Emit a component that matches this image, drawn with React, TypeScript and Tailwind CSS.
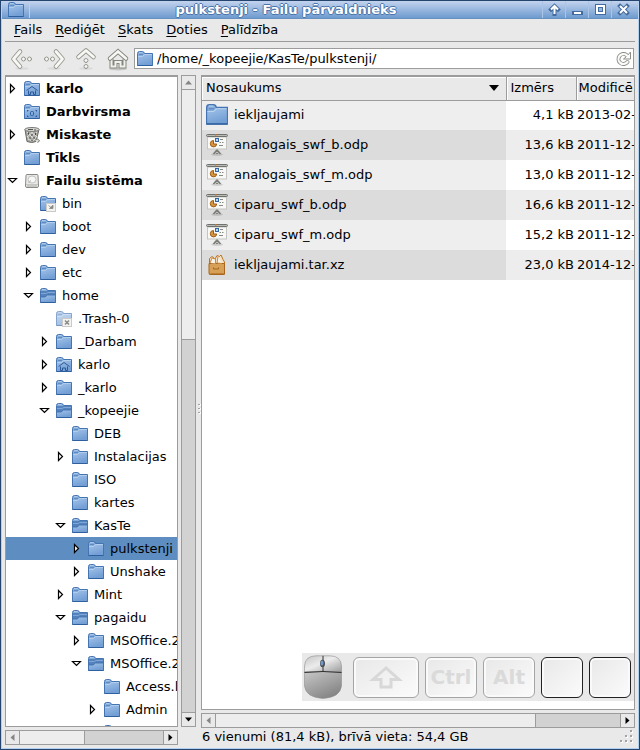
import React from 'react';
import clsx from 'clsx';

type IconKind = 'folder' | 'open' | 'home' | 'desktop' | 'trash' | 'drive' | 'link' | 'locked';

interface TreeNode {
  name: string;
  depth: number;
  icon?: IconKind;
  state?: 'open' | 'closed';
  selected?: boolean;
}

interface FileEntry {
  name: string;
  size: string;
  date: string;
  kind: 'folder' | 'slides' | 'archive';
}

const TREE: TreeNode[] = [
  { name: 'karlo', depth: 0, icon: 'home', state: 'closed' },
  { name: 'Darbvirsma', depth: 0, icon: 'desktop' },
  { name: 'Miskaste', depth: 0, icon: 'trash', state: 'closed' },
  { name: 'Tīkls', depth: 0 },
  { name: 'Failu sistēma', depth: 0, icon: 'drive', state: 'open' },
  { name: 'bin', depth: 1, icon: 'link' },
  { name: 'boot', depth: 1, state: 'closed' },
  { name: 'dev', depth: 1, state: 'closed' },
  { name: 'etc', depth: 1, state: 'closed' },
  { name: 'home', depth: 1, icon: 'open', state: 'open' },
  { name: '.Trash-0', depth: 2, icon: 'locked' },
  { name: '_Darbam', depth: 2, state: 'closed' },
  { name: 'karlo', depth: 2, icon: 'home', state: 'closed' },
  { name: '_karlo', depth: 2, state: 'closed' },
  { name: '_kopeejie', depth: 2, icon: 'open', state: 'open' },
  { name: 'DEB', depth: 3 },
  { name: 'Instalacijas', depth: 3, state: 'closed' },
  { name: 'ISO', depth: 3 },
  { name: 'kartes', depth: 3 },
  { name: 'KasTe', depth: 3, icon: 'open', state: 'open' },
  { name: 'pulkstenji', depth: 4, state: 'closed', selected: true },
  { name: 'Unshake', depth: 4, state: 'closed' },
  { name: 'Mint', depth: 3, state: 'closed' },
  { name: 'pagaidu', depth: 3, icon: 'open', state: 'open' },
  { name: 'MSOffice.2', depth: 4, state: 'closed' },
  { name: 'MSOffice.2', depth: 4, icon: 'open', state: 'open' },
  { name: 'Access.l', depth: 5 },
  { name: 'Admin', depth: 5, state: 'closed' },
  { name: '', depth: 5 },
];

const FILES: FileEntry[] = [
  { name: 'iekljaujami', size: '4,1 kB', date: '2013-02-', kind: 'folder' },
  { name: 'analogais_swf_b.odp', size: '13,6 kB', date: '2011-12-', kind: 'slides' },
  { name: 'analogais_swf_m.odp', size: '13,0 kB', date: '2011-12-', kind: 'slides' },
  { name: 'ciparu_swf_b.odp', size: '16,6 kB', date: '2011-12-', kind: 'slides' },
  { name: 'ciparu_swf_m.odp', size: '15,2 kB', date: '2011-12-', kind: 'slides' },
  { name: 'iekljaujami.tar.xz', size: '23,0 kB', date: '2014-12-', kind: 'archive' },
];

const MENU = ['Fails', 'Rediģēt', 'Skats', 'Doties', 'Palīdzība'];

// Gradients shared by all icons
const Gradients = () => (
  <svg width="0" height="0" className="absolute" aria-hidden="true">
    <defs>
      <linearGradient id="blue" x1="0" y1="0" x2="0.4" y2="1">
        <stop offset="0" stopColor="#a3c3e9" />
        <stop offset="1" stopColor="#739fd5" />
      </linearGradient>
      <linearGradient id="mouseTop" x1="0" y1="0" x2="1" y2="1">
        <stop offset="0" stopColor="#c4c4c4" />
        <stop offset="0.45" stopColor="#ececec" />
        <stop offset="1" stopColor="#9a9a9a" />
      </linearGradient>
      <linearGradient id="mouseBody" x1="0" y1="0" x2="0.6" y2="1">
        <stop offset="0" stopColor="#c8c8c8" />
        <stop offset="1" stopColor="#858585" />
      </linearGradient>
    </defs>
  </svg>
);

const FolderIcon = ({ kind = 'folder', size = 16 }: { kind?: IconKind; size?: number }) => {
  if (kind === 'trash') {
    return (
      <svg width={size} height={size} viewBox="0 0 16 16" className="shrink-0">
        <path d="M1 2.500 3 14.500Q8 16.500 12 14.500L15 2.500" fill="#a8a8a4" stroke="#6b6964" />
        <path d="M3 5l8 8M6 4l7 6M13 5l-9 8M10 4l-7 6M3 9l4 5M13 9l-4 5" stroke="#e6e6e3" strokeWidth="0.800" />
        <path d="M4.500 5.500v2M8 7v2M11.500 6v2M6 10v2M10 10v2M8 13v1" stroke="#454541" />
        <ellipse cx="8" cy="2.500" rx="7.200" ry="2" fill="#d8d8d4" stroke="#7a7a76" />
        <path d="M4 2.500h5M10 3h2" stroke="#55534f" />
        <path d="M11 13.500c2-2.500 4-1 4.500.5l-2 1.500" fill="#ddd" stroke="#77756f" />
      </svg>
    );
  }
  if (kind === 'drive') {
    return (
      <svg width={size} height={size} viewBox="0 0 16 16" className="shrink-0">
        <path d="M3 1.500h10q1 0 1 1l.5 10.500q0 1.500-1.500 1.500H3q-1.500 0-1.500-1.500L2 2.500q0-1 1-1z" fill="#e9e9e7" stroke="#888a85" />
        <ellipse cx="8" cy="6.500" rx="4" ry="3.500" fill="#f7f7f7" stroke="#c3c3c0" />
        <path d="M4.500 9.500 7 7.500" stroke="#b0b0ad" />
        <path d="M2 11.500h12" stroke="#c6c6c3" />
        <path d="M3 13h10" stroke="#a5a5a2" />
      </svg>
    );
  }
  return (
    <svg width={size} height={size} viewBox="0 0 16 16" className="shrink-0">
      <g opacity={kind === 'locked' ? 0.65 : 1}>
        <path d="M.5 14.500V2.500Q.5.500 2.500.500H5.500Q7 .500 7.500 2.500H15.500V14.500z" fill="#86add9" stroke="#4574b3" />
        {kind === 'open' ? (
          <>
            <path d="M1 3h14v6H1z" fill="#5482bd" />
            <path d="M1 5.500H6L8 4.500H15" fill="none" stroke="#7fa6d6" />
            <path d="M1 14V9H5L7.500 7H15V14z" fill="url(#blue)" />
            <path d="M1 9H5L7.500 7H15" fill="none" stroke="#3a69a8" strokeWidth="0.800" />
          </>
        ) : (
          <>
            <path d="M1 14V5H5.500L7.500 3H15V14z" fill="url(#blue)" />
            <path d="M1 5.500H5.500L7.500 3.500H15" fill="none" stroke="#b9d3f0" strokeWidth="0.800" />
            <path d="M2 3.500h4" stroke="#5583bd" strokeWidth="0.800" />
          </>
        )}
        <path d="M.5 14.500h15" stroke="#2f5f9f" />
        <path d="M2 1.500h3.500" stroke="#a9c8eb" />
      </g>
      {kind === 'home' && (
        <path d="M2.500 9.500 8 5.500l5.500 4M4.500 9.500v4h2V11h3v2.500h2v-4" fill="none" stroke="#2c5a98" />
      )}
      {kind === 'desktop' && (
        <g fill="none" stroke="#2c5a98">
          <rect x="6.500" y="7.500" width="3" height="4" rx="1" />
          <path d="M3 6.500h1.500M11.500 6.500H13M3 12.500h1.500M11.500 12.500H13M3.500 6v1.500M12.500 6v1.500M3.500 11.500V13M12.500 11.500V13" />
        </g>
      )}
      {(kind === 'link' || kind === 'locked') && <rect x="6.500" y="7.500" width="9" height="8" fill="#f3f3f2" stroke="#cacac8" />}
      {kind === 'link' && <path d="M8.500 9.500 11 11.500M9.500 12.500h3.500v-3.500z" fill="#888a85" stroke="#888a85" strokeWidth="0.800" />}
      {kind === 'locked' && <path d="m9 9.500 4 4m0-4-4 4" stroke="#888a85" strokeWidth="1.500" />}
    </svg>
  );
};

const SlidesIcon = () => (
  <svg width="22" height="22" viewBox="0 0 22 22" className="shrink-0">
    <ellipse cx="11" cy="20.500" rx="6" ry="1.500" fill="#000" opacity="0.130" />
    <path d="M11 15v2M7.500 20l2.500-3h2l2.500 3" fill="none" stroke="#777973" strokeWidth="1.500" />
    <circle cx="11" cy="18.500" r="1.200" fill="#ddd" stroke="#777973" />
    <rect x="1.500" y="3" width="19" height="12" fill="#f8f8f6" stroke="#c4c4c0" />
    <rect x=".5" y=".5" width="21" height="2" rx="1" fill="#b9b9b5" stroke="#70726d" />
    <path d="M9 1h1.500" stroke="#f57900" strokeWidth="1.500" />
    <path d="M7.500 6.500a3.200 3.200 0 1 0 3.200 3.500L7.500 10z" fill="#d79543" stroke="#9c5e16" />
    <rect x="9.500" y="4.500" width="3" height="3" fill="#b9d3f2" stroke="#3465a4" />
    <path d="M14 5.500h3M13.500 8.500H15M16 8.500h1.500M13 11.500h4" stroke="#898b86" />
  </svg>
);

const ArchiveIcon = () => (
  <svg width="22" height="22" viewBox="0 0 22 22" className="shrink-0">
    <path d="M3.500 8V4.500L6 2.500 9 5l2-3.500 2.500 1L15 1l2 4.500 1.500 2.500v12.500h-15z" fill="#f5e2c5" stroke="#b97325" />
    <path d="M3 9.500h15.500V19q0 1.500-1.500 1.500H4.500Q3 20.500 3 19z" fill="#d6a157" stroke="#a8651d" />
    <path d="M4 9 6 4l3.500 1v4.500M12 2.500 11 9l5 .5" fill="#fbf2e4" stroke="#c58a3f" />
    <path d="M7.500 13.500v1.500h5v-1.500" fill="none" stroke="#a8651d" />
    <path d="M4.500 19.500h13" stroke="#be8036" />
  </svg>
);

// Pale outlined arrow with two dots behind it, rotated for each direction
const ArrowIcon = ({ turn }: { turn: number }) => (
  <svg width="24" height="24" viewBox="0 0 24 24">
    <ellipse cx="12" cy="21.500" rx="7" ry="1.500" fill="#000" opacity="0.060" />
    <g transform={`rotate(${turn} 12 12)`} fill="none" strokeLinecap="round" strokeLinejoin="round">
      <path d="M10 4.500 3.500 12l6.500 7.500" stroke="#96978f" strokeWidth="4.600" />
      <path d="M10 4.500 3.500 12l6.500 7.500" stroke="#f7f7f3" strokeWidth="2.800" />
      <circle cx="13.500" cy="12" r="2" fill="#f7f7f5" stroke="#96978f" />
      <circle cx="19.500" cy="12" r="2" fill="#f7f7f5" stroke="#96978f" />
    </g>
  </svg>
);

const HomeIcon = () => (
  <svg width="24" height="24" viewBox="0 0 24 24">
    <ellipse cx="12" cy="22" rx="9" ry="1.500" fill="#000" opacity="0.150" />
    <path d="M5.500 12v7.500h4V15h5v4.500h4V12" fill="none" stroke="#85867f" strokeWidth="4" />
    <path d="M5.500 12v7.500h4V15h5v4.500h4V12" fill="none" stroke="#f1f1ed" strokeWidth="2" />
    <path d="M4 11.500 12 4.500l8 7" fill="none" stroke="#85867f" strokeWidth="4.500" strokeLinecap="round" />
    <path d="M4 11.500 12 4.500l8 7" fill="none" stroke="#f7f7f4" strokeWidth="2.600" strokeLinecap="round" />
  </svg>
);

const ReloadIcon = () => (
  <svg width="16" height="16" viewBox="0 0 16 16" fill="none">
    <path d="M12.500 11A5 5 0 1 1 11.500 4" stroke="#8d8e89" strokeWidth="4" strokeLinecap="round" />
    <path d="M15.500 1v7H8.500l3-2.500z" fill="#fbfbfa" stroke="#8d8e89" />
    <path d="M12.500 11A5 5 0 1 1 11.500 4L13 5.500" stroke="#fbfbfa" strokeWidth="2.200" strokeLinecap="round" />
  </svg>
);

const Expander = ({ state }: { state?: 'open' | 'closed' }) => (
  <svg width="16" height="16" viewBox="0 0 16 16" className="shrink-0" fill="#fff" stroke="#000" strokeWidth="1.200">
    {state === 'closed' && <path d="M4.500 3.500v8L8.500 7.500z" />}
    {state === 'open' && <path d="M2.500 5.500h8L6.500 9.500z" />}
  </svg>
);

const ScrollArrow = ({ path, label, dim }: { path: string; label: string; dim?: boolean }) => (
  <button aria-label={label} className="flex size-[13px] shrink-0 items-center justify-center bg-[#e9e9e9]">
    <svg width="9" height="9" viewBox="0 0 9 9" fill={dim ? '#858585' : '#000'}>
      <path d={path} />
    </svg>
  </button>
);

const HScroll = ({ thumb }: { thumb: string }) => (
  <div className="flex h-[15px] shrink-0 border border-[#9c9c9c]">
    <ScrollArrow label="Pa kreisi" path="M6.500 1v7L2.500 4.500z" dim />
    <div className="flex min-w-0 flex-1 justify-end border-x border-[#9c9c9c] bg-[#ededed]">
      <div className={clsx('border-l border-[#9c9c9c] bg-[#d2d2d2]', thumb)} />
    </div>
    <ScrollArrow label="Pa labi" path="M2.500 1v7L6.500 4.500z" />
  </div>
);

const TITLE_BUTTONS = [
  { label: 'Sarullēt', path: 'M6.500 11V4M3 6.500 6.500 3 10 6.500' },
  { label: 'Minimizēt', path: 'M3 10h7' },
  { label: 'Maksimizēt', path: 'M3 3h7v7H3z' },
  { label: 'Aizvērt', path: 'm3 3 7 7m0-7-7 7' },
];

const TitleBar = () => (
  <header className="flex h-[18px] shrink-0 items-center border-b border-[#6690c2] bg-linear-to-b from-[#c3d3ee] to-[#6e9bcf]">
    <div className="flex h-full w-7 items-center justify-center border-r border-[#b9cfeb]">
      <FolderIcon />
    </div>
    <h1 className="flex-1 text-center text-[13px] leading-4 font-bold text-white [text-shadow:1px_0_#4a74aa,-1px_0_#4a74aa,0_1px_#4a74aa,0_-1px_#4a74aa]">
      pulkstenji - Failu pārvaldnieks
    </h1>
    <div className="flex h-full pr-1">
      {TITLE_BUTTONS.map((b) => (
        <button key={b.label} aria-label={b.label} className="flex h-full w-[23px] items-center justify-center border-l border-[#a9c5e8]">
          <svg width="13" height="13" viewBox="0 0 13 13" fill="none">
            <path d={b.path} stroke="#426b9f" strokeWidth="4" strokeLinecap="square" />
            <path d={b.path} stroke="#fff" strokeWidth="2" />
          </svg>
        </button>
      ))}
    </div>
  </header>
);

const Toolbar = () => (
  <div className="flex h-[33px] shrink-0 items-start px-1 pt-1.5">
    <button aria-label="Atpakaļ" className="flex h-[22px] w-8 items-center justify-center"><ArrowIcon turn={0} /></button>
    <button aria-label="Uz priekšu" className="flex h-[22px] w-8 items-center justify-center"><ArrowIcon turn={180} /></button>
    <button aria-label="Uz augšu" className="flex h-[22px] w-8 items-center justify-center"><ArrowIcon turn={90} /></button>
    <button aria-label="Mājas" className="flex h-[22px] w-8 items-center justify-center"><HomeIcon /></button>
    <div className="flex h-[21px] min-w-0 flex-1 items-center gap-1 border border-[#9c9c9c] bg-white px-0.5">
      <FolderIcon />
      <input
        aria-label="Atrašanās vieta"
        defaultValue="/home/_kopeejie/KasTe/pulkstenji/"
        className="h-[19px] min-w-0 flex-1 bg-transparent outline-none"
      />
      <button aria-label="Pārlādēt"><ReloadIcon /></button>
    </div>
  </div>
);

const SidePane = () => (
  <div className="flex w-[191px] shrink-0 flex-col gap-[3px]">
    <div className="flex min-h-0 flex-1 gap-[3px]">
      <ul className="min-w-0 flex-1 overflow-hidden border border-t-2 border-[#9c9c9c] bg-white">
        {TREE.map((node, i) => (
          <li
            key={i}
            className={clsx('flex h-[23px] items-center whitespace-nowrap', node.selected && 'bg-[#5e8dc1]')}
            style={{ paddingLeft: node.depth * 16 }}
          >
            <Expander state={node.state} />
            <span className="ml-0.5 flex items-center gap-1.5">
              <FolderIcon kind={node.icon} />
              <span className={clsx(node.depth === 0 && 'font-bold')}>{node.name}</span>
            </span>
          </li>
        ))}
      </ul>
      <div className="flex w-[15px] flex-col border border-[#9c9c9c]">
        <ScrollArrow label="Augšup" path="M1 6.500h7L4.500 2.500z" dim />
        <div className="flex flex-1 flex-col justify-end border-y border-[#9c9c9c] bg-[#ededed]">
          <div className="h-[60%] border-t border-[#9c9c9c] bg-[#d2d2d2]" />
        </div>
        <ScrollArrow label="Lejup" path="M1 2.500h7L4.500 6.500z" />
      </div>
    </div>
    <div className="pr-[18px]">
      <HScroll thumb="w-[55%]" />
    </div>
  </div>
);

const FileTable = () => (
  <table className="w-full table-fixed border-collapse">
    <thead>
      <tr className="h-[23px] border-b border-[#9c9c9c] bg-[#e9e9e9] text-left whitespace-nowrap">
        <th className="border-r border-[#9c9c9c] p-0 pl-1 font-normal shadow-[inset_1px_1px_#fff]">
          <button className="flex w-full items-center justify-between pr-[7px]">
            Nosaukums
            <svg width="10" height="6" viewBox="0 0 10 6"><path d="M0 0h10L5 6z" /></svg>
          </button>
        </th>
        <th className="w-[70px] border-r border-[#9c9c9c] p-0 pl-1 font-normal shadow-[inset_1px_1px_#fff]"><button>Izmērs</button></th>
        <th className="w-[58px] overflow-hidden p-0 pl-0.5 font-normal shadow-[inset_1px_1px_#fff]"><button>Modificē</button></th>
      </tr>
    </thead>
    <tbody>
      {FILES.map((file) => (
        <tr key={file.name} className="group h-[30px] whitespace-nowrap even:bg-[#ededed]">
          <td className="bg-[#eeeeee] p-0 pl-1 group-even:bg-[#dcdcdc]">
            <div className="flex items-center gap-1.5">
              {file.kind === 'folder' && <FolderIcon size={22} />}
              {file.kind === 'slides' && <SlidesIcon />}
              {file.kind === 'archive' && <ArchiveIcon />}
              {file.name}
            </div>
          </td>
          <td className="p-0 pr-0.5 text-right">{file.size}</td>
          <td className="overflow-hidden p-0 pl-px">{file.date}</td>
        </tr>
      ))}
    </tbody>
  </table>
);

const Key = ({ wide, dark, children }: { wide: string; dark?: boolean; children?: React.ReactNode }) => (
  <div
    className={clsx(
      'flex h-[41px] items-center justify-center rounded-md border bg-linear-to-br from-[#e8e8e8] to-[#fbfbfb] text-xl font-bold text-[#dadada] shadow-[inset_0_0_0_2px_#fafafa]',
      dark ? 'border-[#222222]' : 'border-[#a5a5a5]',
      wide,
    )}
  >
    {children}
  </div>
);

const KeyMonitor = () => (
  <div className="absolute right-0 bottom-2 flex h-12 items-center bg-[#e9e9e9] pr-[3px] pl-0.5">
    <svg width="38" height="44" viewBox="0 0 38 44">
      <path d="M.5 17V11Q1 1 12 .8H26Q37 1 37.500 11V17z" fill="url(#mouseTop)" stroke="#8f8f8f" strokeWidth=".6" />
      <path d="M.5 17Q19 15.500 37.500 17V31Q36 42.500 19 43.500Q2 42.500.5 31z" fill="url(#mouseBody)" stroke="#8f8f8f" strokeWidth=".6" />
      <path d="M.5 17.500Q19 15.500 37.500 17.500M19 .8V17" fill="none" stroke="#333" />
      <ellipse cx="18.500" cy="8.500" rx="2.500" ry="3.800" fill="#4b4f55" />
      <ellipse cx="18" cy="8" rx="1.500" ry="2.500" fill="#7298c5" />
    </svg>
    <div className="ml-[11px] flex gap-1.5">
      <Key wide="w-[66px]">
        <svg width="36" height="26" viewBox="0 0 36 26" fill="none" stroke="#d8d8d8" strokeWidth="3">
          <path d="M18 4 5 15.500h8V23h10v-7.500H31z" />
        </svg>
      </Key>
      <Key wide="w-[52px]">Ctrl</Key>
      <Key wide="w-[52px]">Alt</Key>
      <Key wide="w-[42px]" dark />
      <Key wide="w-[42px]" dark />
    </div>
  </div>
);

const StatusBar = () => (
  <footer className="flex h-[17px] shrink-0 items-center justify-between pl-px leading-4">
    <span>6 vienumi (81,4 kB), brīvā vieta: 54,4 GB</span>
    <svg width="16" height="14" viewBox="0 0 16 14">
      <path d="M12 2h2M7 7h2M12 7h2M2 12h2M7 12h2M12 12h2" stroke="#fff" strokeWidth="2" />
      <path d="M11 1h2M6 6h2M11 6h2M1 11h2M6 11h2M11 11h2" stroke="#a2a2a2" strokeWidth="2" />
    </svg>
  </footer>
);

export default function App() {
  return (
    <div className="h-screen border border-[#26456e] bg-[#e9e9e9] font-['DejaVu_Sans',sans-serif] text-[13px] leading-4 text-black">
      <Gradients />
      <div className="flex h-full flex-col border-x border-b border-[#b4d0ef]">
        <TitleBar />
        <nav className="mx-[3px] flex h-[23px] shrink-0 items-center gap-[13px] border-b border-[#9c9c9c] pl-[9px]">
          {MENU.map((item) => (
            <button key={item}>
              <span className="underline underline-offset-2">{item[0]}</span>
              {item.slice(1)}
            </button>
          ))}
        </nav>
        <Toolbar />
        <main className="flex min-h-0 flex-1 px-[3px] pb-[3px]">
          <SidePane />
          <div className="flex w-[5px] shrink-0 items-center justify-center">
            <svg width="5" height="12" viewBox="0 0 5 12">
              <path d="M3 1h2M3 5h2M3 9h2" stroke="#fff" strokeWidth="2" />
              <path d="M2 .5h2M2 4.500h2M2 8.500h2" stroke="#a2a2a2" />
            </svg>
          </div>
          <div className="flex min-w-0 flex-1 flex-col">
            <div className="relative min-h-0 flex-1 overflow-hidden border border-t-2 border-[#9c9c9c] bg-white">
              <FileTable />
              <KeyMonitor />
            </div>
            <div className="mt-[3px]">
              <HScroll thumb="w-[21%]" />
            </div>
            <StatusBar />
          </div>
        </main>
      </div>
    </div>
  );
}
